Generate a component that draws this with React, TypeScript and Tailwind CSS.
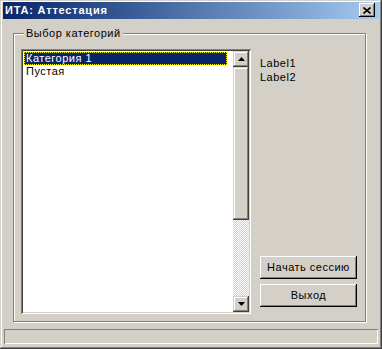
const face = "#d4d0c8";

function ArrowUp() {
  return (
    <svg width="7" height="4" viewBox="0 0 7 4">
      <polygon points="3.5,0 7,4 0,4" fill="#000" />
    </svg>
  );
}

function ArrowDown() {
  return (
    <svg width="7" height="4" viewBox="0 0 7 4">
      <polygon points="0,0 7,0 3.5,4" fill="#000" />
    </svg>
  );
}

const raised =
  "bg-[#d4d0c8] shadow-[inset_-1px_-1px_#404040,inset_1px_1px_#d4d0c8,inset_-2px_-2px_#808080,inset_2px_2px_#fff]";
const button =
  "bg-[#d4d0c8] shadow-[inset_-1px_-1px_#000,inset_1px_1px_#fff,inset_-2px_-2px_#808080,inset_2px_2px_#d4d0c8]";

export default function App() {
  return (
    <div
      className="w-[382px] h-[349px] bg-[#d4d0c8] flex flex-col text-[11px] tracking-[0.5px] text-black font-['Liberation_Sans',Arial,sans-serif] shadow-[inset_-1px_-1px_#404040,inset_1px_1px_#d4d0c8,inset_-2px_-2px_#808080,inset_2px_2px_#fff] overflow-hidden"
      style={{ backgroundColor: face }}
    >
      {/* Title bar */}
      <div className="mx-[3px] mt-[2px] h-[17px] flex items-start bg-linear-to-r from-[#0a246a] to-[#a6caf0]">
        <span className="pl-[2px] leading-[17px] font-bold text-white tracking-[0.8px]">
          ИТА: Аттестация
        </span>
        <div className={`ml-auto mr-[4px] mt-[1px] w-[16px] h-[14px] flex items-center justify-center ${button}`}>
          <svg width="8" height="7" viewBox="0 0 8 7">
            <path d="M0.5 0.5 L7.5 6.5 M7.5 0.5 L0.5 6.5" stroke="#000" strokeWidth="1.6" />
          </svg>
        </div>
      </div>

      {/* Group box */}
      <div className="relative ml-[13px] mt-[14px] w-[353px] h-[289px] border border-[#808080] shadow-[inset_1px_1px_#fff,1px_1px_#fff] flex pl-[7px] pt-[15px] pb-[7px]">
        <span className="absolute left-[10px] -top-[7px] px-[2px] leading-[13px] bg-[#d4d0c8]">
          Выбор категорий
        </span>

        {/* Listbox */}
        <div className="w-[230px] h-[265px] bg-white p-[2px] flex shadow-[inset_1px_1px_#808080,inset_-1px_-1px_#fff,inset_2px_2px_#404040,inset_-2px_-2px_#d4d0c8]">
          <div className="w-[210px] pt-[1px] pl-[1px]">
            <div className="w-[203px] h-[13px] bg-[#0a246a] text-white border border-dotted border-[#ffff00] pl-[1px] leading-[11px]">
              Категория 1
            </div>
            <div className="w-[203px] h-[13px] pl-[2px] leading-[13px]">Пустая</div>
          </div>
          {/* Scrollbar */}
          <div className="w-[16px] flex flex-col">
            <div className={`h-[16px] flex items-center justify-center ${raised}`}>
              <ArrowUp />
            </div>
            <div className={`h-[153px] ${raised}`} />
            <div className="flex-1 bg-[conic-gradient(#fff_25%,#d4d0c8_0_50%,#fff_0_75%,#d4d0c8_0)] bg-[length:2px_2px]" />
            <div className={`h-[16px] flex items-center justify-center ${raised}`}>
              <ArrowDown />
            </div>
          </div>
        </div>

        {/* Right column */}
        <div className="ml-[9px] w-[97px] flex flex-col">
          <div className="mt-[7px] leading-[14px]">Label1</div>
          <div className="leading-[14px]">Label2</div>
          <div className="mt-auto flex flex-col gap-[5px] mb-[7px]">
            <div className={`h-[23px] flex items-center justify-center ${button}`}>Начать сессию</div>
            <div className={`h-[23px] flex items-center justify-center ${button}`}>Выход</div>
          </div>
        </div>
      </div>

      {/* Status bar */}
      <div className="ml-[4px] mt-[7px] w-[374px] h-[15px] shadow-[inset_1px_1px_#808080,inset_-1px_-1px_#fff]" />
    </div>
  );
}
